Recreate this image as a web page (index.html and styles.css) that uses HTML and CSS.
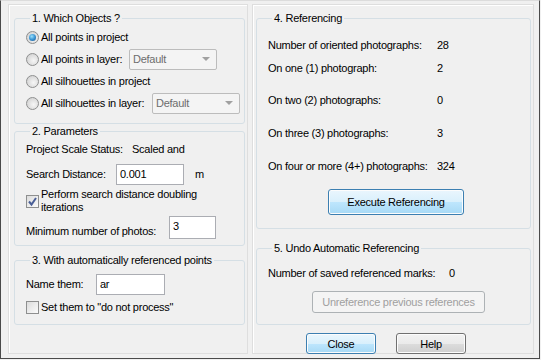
FILE: index.html
```html
<!DOCTYPE html>
<html lang="en">
<head>
    <meta charset="UTF-8">
    <title>Automatic Referencing</title>
    <link rel="stylesheet" href="styles.css">
</head>
<body>
<div class="dialog">
    <div class="panel panel-left">
        <fieldset class="group g1">
            <legend>1. Which Objects ?</legend>
            <div class="opt"><span class="radio on"></span><span>All points in project</span></div>
            <div class="opt"><span class="radio"></span><span class="opt-label w-layer">All points in layer:</span>
                <div class="select"><span>Default</span><i class="arrow"></i></div>
            </div>
            <div class="opt"><span class="radio"></span><span>All silhouettes in project</span></div>
            <div class="opt"><span class="radio"></span><span class="opt-label w-sil">All silhouettes in layer:</span>
                <div class="select"><span>Default</span><i class="arrow"></i></div>
            </div>
        </fieldset>

        <fieldset class="group g2">
            <legend>2. Parameters</legend>
            <div class="line scale"><span class="lbl-scale">Project Scale Status:</span><span>Scaled and</span></div>
            <div class="field search">
                <span class="lbl-search">Search Distance:</span>
                <div class="input in-search">0.001</div>
                <span class="unit">m</span>
            </div>
            <div class="check-row doubling">
                <span class="check on"><svg width="11" height="11" viewBox="0 0 11 11"><path d="M2 5.5 L4.5 8.5 L9 2" fill="none" stroke="#4a5f97" stroke-width="2"/></svg></span>
                <span>Perform search distance doubling<br>iterations</span>
            </div>
            <div class="field minimum">
                <span class="lbl-min">Minimum number of photos:</span>
                <div class="input in-min">3</div>
            </div>
        </fieldset>

        <fieldset class="group g3">
            <legend>3. With automatically referenced points</legend>
            <div class="field name">
                <span class="lbl-name">Name them:</span>
                <div class="input in-name">ar</div>
            </div>
            <div class="check-row noprocess">
                <span class="check"></span>
                <span>Set them to "do not process"</span>
            </div>
        </fieldset>
    </div>

    <div class="panel panel-right">
        <fieldset class="group g4">
            <legend>4. Referencing</legend>
            <div class="stat s1"><span>Number of oriented photographs:</span><span>28</span></div>
            <div class="stat s2"><span>On one (1) photograph:</span><span>2</span></div>
            <div class="stat s3"><span>On two (2) photographs:</span><span>0</span></div>
            <div class="stat s4"><span>On three (3) photographs:</span><span>3</span></div>
            <div class="stat s4"><span>On four or more (4+) photographs:</span><span>324</span></div>
            <button class="btn focus execute">Execute Referencing</button>
        </fieldset>

        <fieldset class="group g5">
            <legend>5. Undo Automatic Referencing</legend>
            <div class="stat saved"><span>Number of saved referenced marks:</span><span>0</span></div>
            <button class="btn disabled unref">Unreference previous references</button>
        </fieldset>

        <div class="footer">
            <button class="btn focus">Close</button>
            <button class="btn">Help</button>
        </div>
    </div>
</div>
</body>
</html>
```

FILE: styles.css
```css
* {
    box-sizing: border-box;
}
body {
    margin: 0;
    background: #f0f0f0;
    font-family: "Liberation Sans", Arial, sans-serif;
    font-size: 11px;
    letter-spacing: -0.25px;
    line-height: 13px;
    color: #000;
}
.dialog {
    width: 540px;
    height: 359px;
    border: 1px solid #4a4a4a;
    border-top-color: #dcdcdc;
    background: #f0f0f0;
    display: flex;
    gap: 4px;
    padding: 3px 0 0 7px;
}
.panel {
    height: 350px;
    border: 1px solid #dedede;
    box-shadow: inset 1px 1px 0 #fff;
}
.panel-left {
    width: 240px;
    padding: 7px 2px 0 5px;
}
.panel-right {
    width: 282px;
    padding: 7px 2px 0 3px;
}
.group {
    margin: 0;
    min-width: 0;
    border: 1px solid #d5dfe5;
    border-radius: 3px;
    padding: 0 10px 6px 11px;
}
.group legend {
    padding: 0 2px;
    margin-left: 4px;
    line-height: 13px;
}

/* 1. which objects */
.g1 {
    padding-top: 1px;
    padding-bottom: 9px;
}
.opt {
    display: flex;
    align-items: center;
    height: 22px;
    white-space: nowrap;
}
.radio {
    width: 13px;
    height: 13px;
    flex: none;
    margin-right: 2px;
    border: 1px solid #8e8f8f;
    border-radius: 50%;
    background: radial-gradient(circle at 60% 60%, #f6f6f6 0%, #dcdcdc 60%, #c9c9c9 100%);
    display: flex;
    align-items: center;
    justify-content: center;
}
.radio.on::after {
    content: "";
    width: 7px;
    height: 7px;
    border-radius: 50%;
    background: radial-gradient(circle at 40% 35%, #9be0fa 0%, #3a95d4 50%, #1a4f86 100%);
}
.opt-label {
    flex: none;
}
.w-layer {
    width: 88px;
}
.w-sil {
    width: 111px;
}
.select {
    width: 88px;
    height: 21px;
    flex: none;
    border: 1px solid #bcbcbc;
    border-radius: 2px;
    background: #f4f4f4;
    color: #6d6d6d;
    display: flex;
    align-items: center;
    justify-content: space-between;
    padding: 0 6px 0 3px;
}
.arrow {
    width: 0;
    height: 0;
    border-left: 4px solid transparent;
    border-right: 4px solid transparent;
    border-top: 4px solid #a0a0a0;
}

/* 2. parameters */
.g2 {
    margin-top: 1px;
    padding-top: 5px;
}
.line {
    display: flex;
}
.lbl-scale {
    width: 106px;
}
.field {
    display: flex;
    align-items: center;
    white-space: nowrap;
}
.search {
    margin-top: 8px;
}
.lbl-search {
    width: 90px;
}
.input {
    height: 21px;
    flex: none;
    border: 1px solid #abadb3;
    background: #fff;
    padding: 3px 3px 0;
}
.in-search {
    width: 68px;
}
.unit {
    margin-left: 11px;
}
.check-row {
    display: flex;
    align-items: center;
}
.check {
    width: 13px;
    height: 13px;
    flex: none;
    margin-right: 2px;
    border: 1px solid #8e8f8f;
    background: linear-gradient(135deg, #dcdcdc, #fbfbfb);
    display: flex;
    align-items: center;
    justify-content: center;
}
.check svg {
    display: block;
}
.doubling {
    margin-top: 3px;
}
.minimum {
    margin-top: 2px;
}
.lbl-min {
    width: 143px;
    padding-top: 8px;
}
.in-min {
    width: 47px;
    height: 23px;
}

/* 3. naming */
.g3 {
    margin-top: 8px;
    padding-top: 7px;
    padding-bottom: 10px;
}
.lbl-name {
    width: 70px;
}
.in-name {
    width: 69px;
}
.noprocess {
    margin-top: 6px;
}

/* 4. referencing */
.g4 {
    padding-top: 14px;
    padding-bottom: 13px;
}
.stat {
    display: flex;
    height: 13px;
    white-space: nowrap;
}
.stat span:first-child {
    width: 169px;
}
.s2 {
    margin-top: 10px;
}
.s3 {
    margin-top: 19px;
}
.s4 {
    margin-top: 20px;
}
.btn {
    font-family: inherit;
    font-size: 11px;
    letter-spacing: inherit;
    color: #000;
    height: 21px;
    border: 1px solid #707070;
    border-radius: 3px;
    background: linear-gradient(#f2f2f2 0%, #ebebeb 50%, #dddddd 51%, #cfcfcf 100%);
    box-shadow: inset 0 0 0 1px #fcfcfc;
    padding: 0;
}
.btn.focus {
    border-color: #3c7fb1;
    background: linear-gradient(#eaf6fd 0%, #d9f0fc 50%, #bee6fd 51%, #a7d9f5 100%);
}
.btn.disabled {
    color: #a0a0a0;
    border-color: #adb2b5;
    background: #f4f4f4;
    box-shadow: none;
}
.execute {
    display: block;
    width: 136px;
    height: 26px;
    margin: 16px 0 0 60px;
}

/* 5. undo */
.g5 {
    margin-top: 13px;
    padding-top: 12px;
    padding-bottom: 11px;
}
.saved span:first-child {
    width: 181px;
}
.unref {
    display: block;
    width: 173px;
    height: 22px;
    margin: 11px 0 0 44px;
}
.footer {
    display: flex;
    gap: 20px;
    margin: 8px 0 0 50px;
}
.footer .btn {
    width: 70px;
    height: 21px;
}
```
